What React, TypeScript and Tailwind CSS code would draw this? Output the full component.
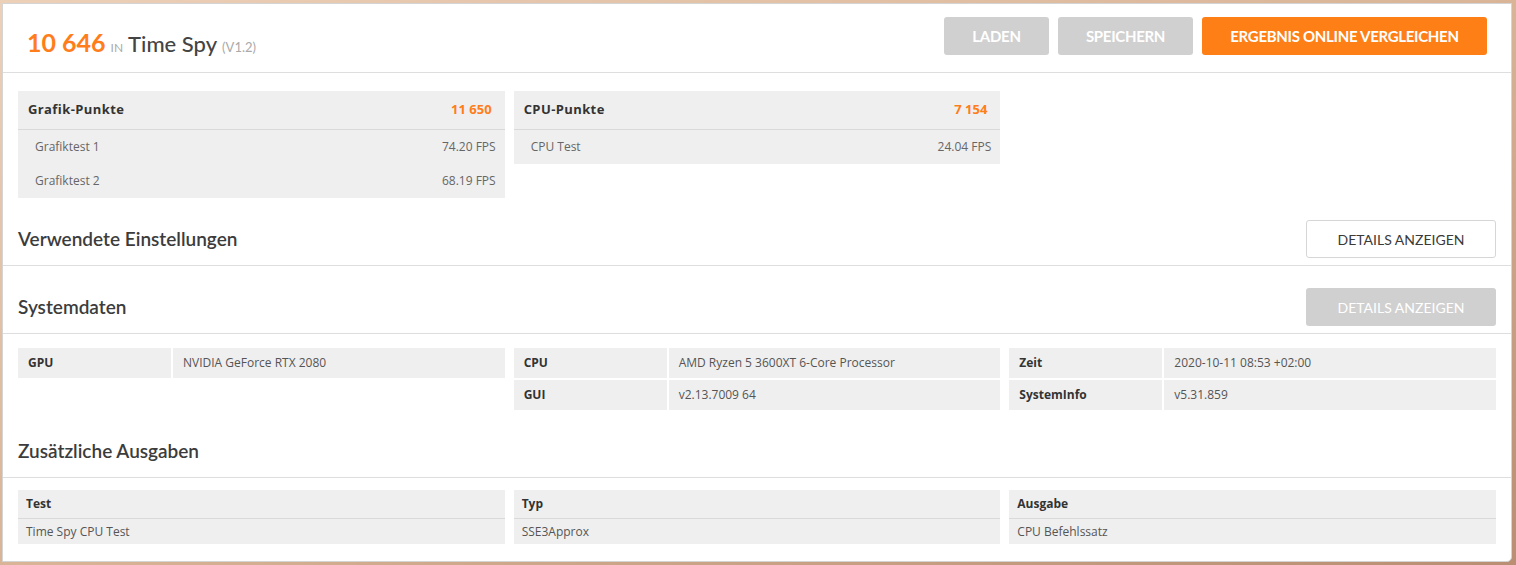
import React from 'react';

const ORANGE = 'text-[#ff7d1a]';

const scoreTables = [
  {
    title: 'Grafik-Punkte',
    score: '11 650',
    rows: [
      { name: 'Grafiktest 1', value: '74.20 FPS' },
      { name: 'Grafiktest 2', value: '68.19 FPS' },
    ],
  },
  {
    title: 'CPU-Punkte',
    score: '7 154',
    rows: [{ name: 'CPU Test', value: '24.04 FPS' }],
  },
];

const systemColumns = [
  [{ label: 'GPU', value: 'NVIDIA GeForce RTX 2080' }],
  [
    { label: 'CPU', value: 'AMD Ryzen 5 3600XT 6-Core Processor' },
    { label: 'GUI', value: 'v2.13.7009 64' },
  ],
  [
    { label: 'Zeit', value: '2020-10-11 08:53 +02:00' },
    { label: 'SystemInfo', value: 'v5.31.859' },
  ],
];

const extraOutputs = [
  { head: 'Test', value: 'Time Spy CPU Test' },
  { head: 'Typ', value: 'SSE3Approx' },
  { head: 'Ausgabe', value: 'CPU Befehlssatz' },
];

const lato = "font-['Lato',sans-serif]";
const openSans = "font-['Open_Sans',sans-serif]";

function TopButton({ label, width, primary }: { label: string; width: string; primary?: boolean }) {
  return (
    <button
      className={`h-[38px] ${width} rounded-[3px] ${lato} text-[15px] font-bold uppercase tracking-[-0.3px] text-white ${
        primary ? 'bg-[#ff7f17]' : 'bg-[#d0d0d0]'
      }`}
    >
      {label}
    </button>
  );
}

function SectionHeading({ title, button }: { title: string; button?: 'outline' | 'disabled' }) {
  return (
    <div className="flex h-[38px] items-center justify-between">
      <h2 className={`${lato} text-[19px] font-semibold text-[#3c3c3c]`}>{title}</h2>
      {button === 'outline' && (
        <button className={`h-[38px] w-[190px] rounded-[3px] border border-[#d6d6d6] bg-white ${lato} text-[14px] text-[#3a3a3a]`}>
          DETAILS ANZEIGEN
        </button>
      )}
      {button === 'disabled' && (
        <button className={`h-[38px] w-[190px] rounded-[3px] bg-[#d0d0d0] ${lato} text-[14px] text-white`}>
          DETAILS ANZEIGEN
        </button>
      )}
    </div>
  );
}

export default function App() {
  return (
    <div className="min-h-[565px] w-[1516px] bg-gradient-to-br from-[#ecd0b8] via-[#d9b496] to-[#b98e72] pl-[2px] pt-[3px]">
      <div className="w-[1510px] rounded-br-[5px] border border-[#d4d4d4] bg-white pb-[17px]">
        {/* header */}
        <div className="flex h-[69px] items-start justify-between border-b border-[#dedede] pl-[24px] pr-[24px]">
          <div className={`mt-[20px] flex items-baseline ${lato}`}>
            <span className={`text-[25px] font-bold ${ORANGE}`}>10 646</span>
            <span className="ml-[5px] text-[12px] uppercase text-[#aaaaaa]">in</span>
            <span className="ml-[5px] text-[22px] font-medium text-[#444444]">Time Spy</span>
            <span className="ml-[5px] text-[13px] text-[#aaaaaa]">(V1.2)</span>
          </div>
          <div className="mt-[13px] flex gap-[9px]">
            <TopButton label="Laden" width="w-[105px]" />
            <TopButton label="Speichern" width="w-[135px]" />
            <TopButton label="Ergebnis online vergleichen" width="w-[285px]" primary />
          </div>
        </div>

        {/* scores */}
        <div className={`grid grid-cols-3 items-start gap-x-[9px] px-[15px] pt-[18px] ${openSans}`}>
          {scoreTables.map((t) => (
            <div key={t.title} className="bg-[#efefef]">
              <div className="flex h-[39px] items-center justify-between border-b border-[#d9d9d9] pl-[10px] pr-[13px] text-[13px] font-bold">
                <span className="tracking-[0.4px] text-[#333333]">{t.title}</span>
                <span className={ORANGE}>{t.score}</span>
              </div>
              {t.rows.map((r) => (
                <div key={r.name} className="flex h-[34px] items-center justify-between pl-[17px] pr-[9px] text-[12px] text-[#666666]">
                  <span>{r.name}</span>
                  <span>{r.value}</span>
                </div>
              ))}
            </div>
          ))}
        </div>

        {/* settings */}
        <div className="border-b border-[#dedede] px-[15px] pb-[7px] pt-[22px]">
          <SectionHeading title="Verwendete Einstellungen" button="outline" />
        </div>

        {/* system data */}
        <div className="border-b border-[#dedede] px-[15px] pb-[7px] pt-[22px]">
          <SectionHeading title="Systemdaten" button="disabled" />
        </div>
        <div className={`grid grid-cols-3 items-start gap-x-[9px] px-[15px] pt-[14px] ${openSans} text-[12px]`}>
          {systemColumns.map((col, i) => (
            <div key={i} className="flex flex-col gap-[2px]">
              {col.map((row) => (
                <div key={row.label} className="flex h-[30px] gap-[2px]">
                  <div className="flex w-[153px] items-center bg-[#efefef] pl-[10px] font-bold text-[#333333]">{row.label}</div>
                  <div className="flex flex-1 items-center bg-[#efefef] pl-[10px] text-[#555555]">{row.value}</div>
                </div>
              ))}
            </div>
          ))}
        </div>

        {/* extra outputs */}
        <div className="border-b border-[#dedede] px-[15px] pb-[7px] pt-[22px]">
          <SectionHeading title="Zusätzliche Ausgaben" />
        </div>
        <div className={`grid grid-cols-3 gap-x-[9px] px-[15px] pt-[12px] ${openSans} text-[12px]`}>
          {extraOutputs.map((o) => (
            <div key={o.head} className="bg-[#efefef]">
              <div className="flex h-[29px] items-center border-b border-[#d9d9d9] pl-[8px] font-bold text-[#333333]">{o.head}</div>
              <div className="flex h-[25px] items-center pl-[8px] text-[#555555]">{o.value}</div>
            </div>
          ))}
        </div>
      </div>
    </div>
  );
}
